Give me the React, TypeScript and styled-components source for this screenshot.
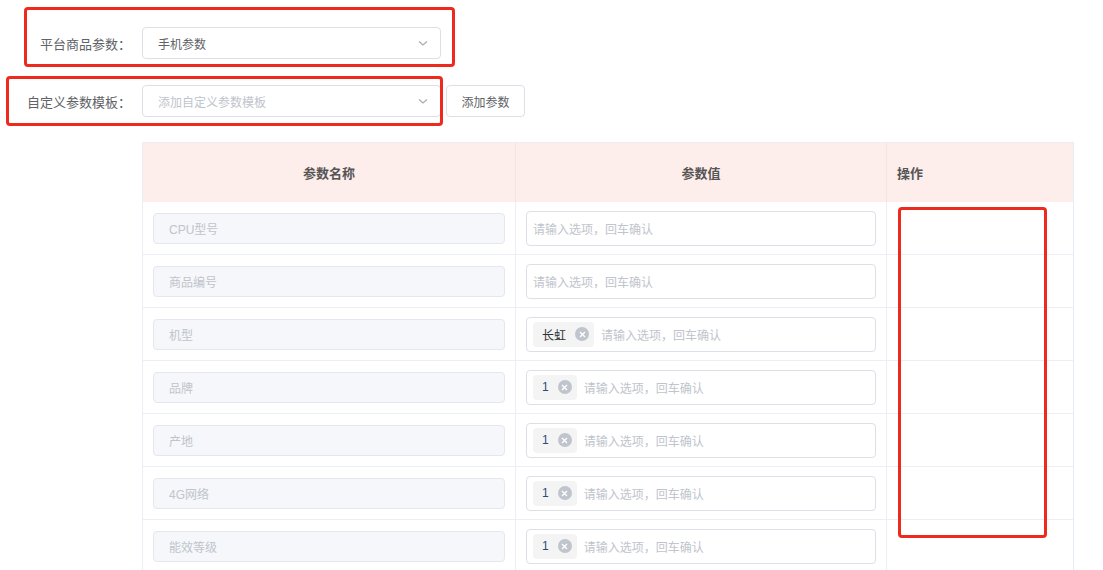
import React from 'react';
import styled, { createGlobalStyle } from 'styled-components';

const GlobalStyle = createGlobalStyle`
  html, body {
    margin: 0;
    padding: 0;
    background: #fff;
  }
  body {
    font-family: 'Liberation Sans', 'Noto Sans CJK SC', sans-serif;
    color: #606266;
  }
`;

const Page = styled.div`
  position: relative;
  width: 1103px;
  padding-top: 27px;
`;

const FormRow = styled.div<{ $gap?: number }>`
  display: flex;
  align-items: center;
  height: 32px;
  margin-bottom: ${(p) => p.$gap ?? 0}px;
`;

const Label = styled.label`
  width: 142px;
  box-sizing: border-box;
  padding-right: 11px;
  text-align: right;
  font-size: 13px;
  color: #606266;
  white-space: nowrap;
`;

const Select = styled.div`
  width: 299px;
  height: 32px;
  box-sizing: border-box;
  border: 1px solid #dcdfe6;
  border-radius: 4px;
  display: flex;
  align-items: center;
  justify-content: space-between;
  padding: 0 11px 0 15px;
`;

const SelectText = styled.span<{ $placeholder?: boolean }>`
  font-size: 12px;
  color: ${(p) => (p.$placeholder ? '#c0c4cc' : '#606266')};
`;

const Button = styled.button`
  margin-left: 5px;
  width: 79px;
  height: 32px;
  border: 1px solid #dcdfe6;
  border-radius: 4px;
  background: #fff;
  font-family: inherit;
  font-size: 12px;
  color: #606266;
  padding: 0;
`;

const Table = styled.div`
  margin: 25px 0 0 142px;
  width: 930px;
  border-left: 1px solid #ebeef5;
  border-right: 1px solid #e6ebf5;
  border-top: 1px solid #ebeef5;
`;

const Row = styled.div`
  display: grid;
  grid-template-columns: 373px 371px 1fr;
`;

const HeadCell = styled.div<{ $left?: boolean }>`
  height: 59px;
  background: #fdedeb;
  display: flex;
  align-items: center;
  justify-content: ${(p) => (p.$left ? 'flex-start' : 'center')};
  padding-left: ${(p) => (p.$left ? '10px' : '0')};
  font-size: 13px;
  font-weight: bold;
  color: #555;
  border-right: 1px solid #f3e4e4;
  &:last-child {
    border-right: none;
  }
`;

const Cell = styled.div<{ $pad: number }>`
  height: 52px;
  display: flex;
  align-items: center;
  padding: 0 ${(p) => p.$pad}px;
  border-bottom: 1px solid #ebeef5;
  border-right: 1px solid #ebeef5;
  &:last-child {
    border-right: none;
  }
`;

const NameInput = styled.div`
  flex: 1;
  height: 31px;
  box-sizing: border-box;
  background: #f5f7fa;
  border: 1px solid #e4e7ed;
  border-radius: 4px;
  display: flex;
  align-items: center;
  padding-left: 15px;
  font-size: 12px;
  color: #c0c4cc;
`;

const TagInput = styled.div`
  flex: 1;
  height: 35px;
  box-sizing: border-box;
  border: 1px solid #dcdfe6;
  border-radius: 4px;
  display: flex;
  align-items: center;
  padding-left: 6px;
  gap: 7px;
`;

const Tag = styled.span`
  height: 25px;
  display: inline-flex;
  align-items: center;
  gap: 9px;
  padding: 0 5px 0 9px;
  background: #f4f4f5;
  border-radius: 4px;
  font-size: 12px;
  color: #303133;
`;

const TagText = styled.span<{ $num?: boolean }>`
  color: ${(p) => (p.$num ? '#2b4a7a' : '#303133')};
`;

const Close = styled.span`
  width: 14px;
  height: 14px;
  border-radius: 50%;
  background: #c0c4cc;
  display: inline-flex;
  align-items: center;
  justify-content: center;
`;

const Placeholder = styled.span`
  font-size: 12px;
  color: #c0c4cc;
`;

const Mark = styled.div`
  position: absolute;
  border: 3px solid #ee2a1f;
  border-radius: 4px;
  box-sizing: border-box;
  pointer-events: none;
`;

const Chevron = () => (
  <svg width="12" height="12" viewBox="0 0 12 12">
    <path d="M2 4.5 L6 8 L10 4.5" fill="none" stroke="#a8abb2" strokeWidth="1.2" />
  </svg>
);

const CloseX = () => (
  <svg width="7" height="7" viewBox="0 0 7 7">
    <path d="M1 1 L6 6 M6 1 L1 6" stroke="#fff" strokeWidth="1.4" />
  </svg>
);

type Param = { name: string; tags: string[] };

const params: Param[] = [
  { name: 'CPU型号', tags: [] },
  { name: '商品编号', tags: [] },
  { name: '机型', tags: ['长虹'] },
  { name: '品牌', tags: ['1'] },
  { name: '产地', tags: ['1'] },
  { name: '4G网络', tags: ['1'] },
  { name: '能效等级', tags: ['1'] },
];

export default function App() {
  return (
    <>
      <GlobalStyle />
      <Page>
        <FormRow $gap={26}>
          <Label>平台商品参数：</Label>
          <Select>
            <SelectText>手机参数</SelectText>
            <Chevron />
          </Select>
        </FormRow>
        <FormRow>
          <Label>自定义参数模板：</Label>
          <Select>
            <SelectText $placeholder>添加自定义参数模板</SelectText>
            <Chevron />
          </Select>
          <Button>添加参数</Button>
        </FormRow>

        <Table>
          <Row>
            <HeadCell>参数名称</HeadCell>
            <HeadCell>参数值</HeadCell>
            <HeadCell $left>操作</HeadCell>
          </Row>
          {params.map((p) => (
            <Row key={p.name}>
              <Cell $pad={10}>
                <NameInput>{p.name}</NameInput>
              </Cell>
              <Cell $pad={10}>
                <TagInput>
                  {p.tags.map((t) => (
                    <Tag key={t}>
                      <TagText $num={t === '1'}>{t}</TagText>
                      <Close>
                        <CloseX />
                      </Close>
                    </Tag>
                  ))}
                  <Placeholder>请输入选项，回车确认</Placeholder>
                </TagInput>
              </Cell>
              <Cell $pad={10} />
            </Row>
          ))}
        </Table>

        <Mark style={{ left: 24, top: 7, width: 431, height: 60 }} />
        <Mark style={{ left: 6, top: 76, width: 437, height: 50 }} />
        <Mark style={{ left: 898, top: 207, width: 149, height: 331 }} />
      </Page>
    </>
  );
}
